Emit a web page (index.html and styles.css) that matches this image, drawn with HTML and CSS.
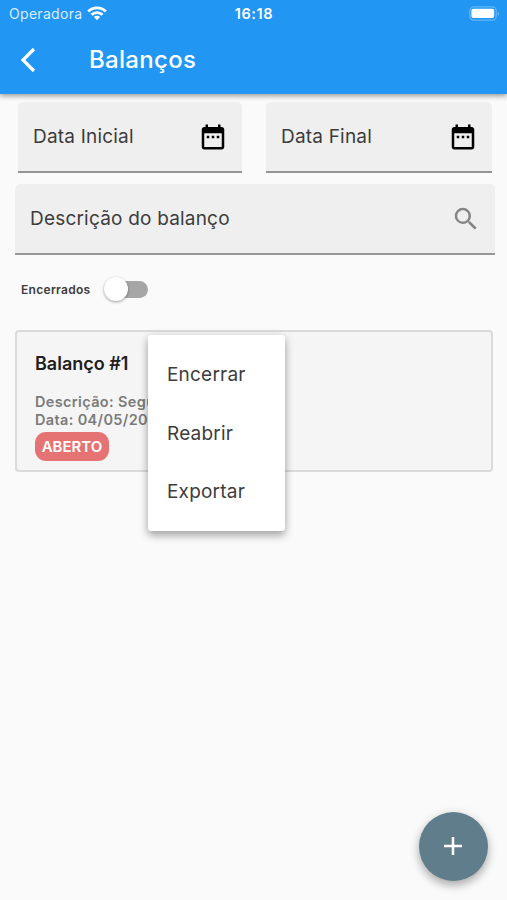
FILE: index.html
```html
<!DOCTYPE html>
<html lang="pt-BR">
<head>
<meta charset="utf-8">
<meta name="viewport" content="width=device-width, initial-scale=1">
<title>Balanços</title>
<link rel="stylesheet" href="styles.css">
</head>
<body>
<header class="appbar">
  <div class="status">
    <div class="carrier"><span class="carrier-name">Operadora</span>
      <svg class="wifi" viewBox="0 0 20 15" fill="none" stroke="#fff" stroke-width="2.8"><path d="M1.2 5.5a12.4 12.4 0 0 1 17.6 0M4.5 8.8a7.8 7.8 0 0 1 11 0"/><path d="M10 14.2 6.9 11.1a4.4 4.4 0 0 1 6.2 0z" fill="#fff" stroke="none"/></svg>
    </div>
    <time class="clock">16:18</time>
    <svg class="battery" viewBox="0 0 31 15"><rect x=".8" y=".8" width="26.4" height="13.4" rx="4" fill="#2196f3" stroke="#64b5f6" stroke-width="1.3"/><rect x="2.4" y="2.7" width="22.8" height="9.4" rx="2" fill="#fff"/><path d="M28.6 5.2c2 .8 2 3.8 0 4.6z" fill="#64b5f6"/></svg>
  </div>
  <div class="titlebar">
    <svg class="back" viewBox="0 0 16 26" fill="none" stroke="#fff" stroke-width="3.2"><path d="M14 2 3 13l11 11"/></svg>
    <h1 class="title">Balanços</h1>
  </div>
</header>
<main class="content">
  <div class="dates">
    <div class="field">
      <span class="label">Data Inicial</span>
      <svg class="icon" viewBox="0 0 24 24"><path d="M9 11H7v2h2v-2zm4 0h-2v2h2v-2zm4 0h-2v2h2v-2zm2-7h-1V2h-2v2H8V2H6v2H5c-1.1 0-2 .9-2 2v14c0 1.1.9 2 2 2h14c1.1 0 2-.9 2-2V6c0-1.1-.9-2-2-2zm0 16H5V9h14v11z"/></svg>
    </div>
    <div class="field">
      <span class="label">Data Final</span>
      <svg class="icon" viewBox="0 0 24 24"><path d="M9 11H7v2h2v-2zm4 0h-2v2h2v-2zm4 0h-2v2h2v-2zm2-7h-1V2h-2v2H8V2H6v2H5c-1.1 0-2 .9-2 2v14c0 1.1.9 2 2 2h14c1.1 0 2-.9 2-2V6c0-1.1-.9-2-2-2zm0 16H5V9h14v11z"/></svg>
    </div>
  </div>
  <div class="field search">
    <span class="label">Descrição do balanço</span>
    <svg class="icon" viewBox="0 0 24 24"><path d="M15.5 14h-.79l-.28-.27A6.47 6.47 0 0 0 16 9.5 6.5 6.5 0 1 0 9.5 16c1.61 0 3.09-.59 4.23-1.57l.27.28v.79l5 4.99L20.49 19l-4.99-5zm-6 0C7.01 14 5 11.99 5 9.5S7.01 5 9.5 5 14 7.01 14 9.5 11.99 14 9.5 14z"/></svg>
  </div>
  <div class="toggle">
    <span class="toggle-label">Encerrados</span>
    <span class="switch"><span class="thumb"></span></span>
  </div>
  <article class="card">
    <h2 class="card-title">Balanço #1</h2>
    <p class="meta">Descrição: Segu</p>
    <p class="meta">Data: 04/05/20</p>
    <span class="badge">ABERTO</span>
    <ul class="menu">
      <li class="item">Encerrar</li>
      <li class="item">Reabrir</li>
      <li class="item">Exportar</li>
    </ul>
  </article>
</main>
<button class="fab" aria-label="Adicionar"><svg viewBox="0 0 18 18" width="18" height="18" stroke="#fff" stroke-width="2.5"><path d="M9 0v18M0 9h18"/></svg></button>
</body>
</html>
```
FILE: styles.css
```css
* { box-sizing: border-box; }
body {
  margin: 0;
  height: 900px;
  overflow: hidden;
  background: #fafafa;
  color: #3c3c3c;
  font-family: Inter, "Liberation Sans", sans-serif;
}
h1, h2, p, ul { margin: 0; padding: 0; }
svg { display: block; }
.appbar {
  position: relative;
  height: 94px;
  background: #2196f3;
  color: #fff;
  box-shadow: 0 2px 5px rgba(0, 0, 0, .38);
}
.status {
  display: grid;
  grid-template-columns: 1fr auto 1fr;
  align-items: center;
  height: 27px;
  padding: 0 7px 0 9px;
}
.carrier { display: flex; align-items: center; gap: 5px; }
.carrier-name { font-size: 14px; letter-spacing: .3px; color: #d9edfd; }
.wifi { width: 20px; height: 15px; }
.clock { margin-right: 1px; font-size: 14.5px; font-weight: 600; letter-spacing: .6px; }
.battery { width: 31px; height: 15px; justify-self: end; }
.titlebar { display: flex; align-items: center; height: 66px; padding-left: 20px; }
.back { width: 16px; height: 26px; }
.title {
  margin-left: 53px;
  font-size: 24px;
  line-height: 30px;
  font-weight: 500;
  letter-spacing: .3px;
}
.content { padding: 8px 15px 0; }
.dates {
  display: grid;
  grid-template-columns: 224px 226px;
  gap: 24px;
  padding-left: 3px;
}
.field {
  display: flex;
  align-items: center;
  justify-content: space-between;
  height: 71px;
  padding: 0 14px 0 15px;
  border-bottom: 2px solid #959595;
  border-radius: 5px 5px 0 0;
  background: #efefef;
}
.label { padding-top: 1px; font-size: 19px; line-height: 24px; letter-spacing: .2px; }
.icon { width: 30px; height: 30px; fill: #000; }
.search { margin-top: 11px; width: 480px; }
.search .icon { fill: #858585; }
.toggle { display: flex; align-items: center; gap: 17px; height: 30px; margin: 19px 0 26px 6px; }
.toggle-label { font-size: 12px; font-weight: 600; letter-spacing: .3px; }
.switch { width: 40px; height: 17px; border-radius: 9px; background: #a6a6a6; }
.thumb {
  display: block;
  width: 24px;
  height: 24px;
  margin: -4px 0 0 -4px;
  border-radius: 50%;
  background: #fff;
  box-shadow: 0 1px 3px rgba(0, 0, 0, .38);
}
.card {
  position: relative;
  width: 478px;
  height: 142px;
  padding: 21px 18px;
  border: 2px solid #dadada;
  border-radius: 4px;
  background: #f5f5f5;
}
.card-title { margin-bottom: 18px; font-size: 18px; line-height: 22px; font-weight: 600; color: #202020; }
.meta { font-size: 14.5px; line-height: 17.5px; font-weight: 600; letter-spacing: .35px; color: #7b7b7b; }
.badge {
  display: flex;
  align-items: center;
  justify-content: center;
  width: 74px;
  height: 29px;
  margin-top: 4px;
  border-radius: 11px;
  background: #e57373;
  color: #fff;
  font-size: 15px;
  font-weight: 600;
}
.menu {
  position: absolute;
  top: 3px;
  left: 131px;
  width: 137px;
  height: 196px;
  padding: 10px 0;
  border-radius: 3px;
  background: #fff;
  box-shadow: 0 5px 9px rgba(0, 0, 0, .28), 0 1px 8px rgba(0, 0, 0, .12);
  list-style: none;
}
.item { display: flex; align-items: center; height: 58.7px; padding-left: 19px; font-size: 19px; letter-spacing: .2px; }
.fab {
  position: absolute;
  right: 19.5px;
  bottom: 19.5px;
  display: flex;
  align-items: center;
  justify-content: center;
  width: 69px;
  height: 69px;
  padding: 0;
  border: 0;
  border-radius: 50%;
  background: #607d8b;
  box-shadow: 0 5px 9px rgba(0, 0, 0, .25), 0 1px 12px rgba(0, 0, 0, .1);
}
```
